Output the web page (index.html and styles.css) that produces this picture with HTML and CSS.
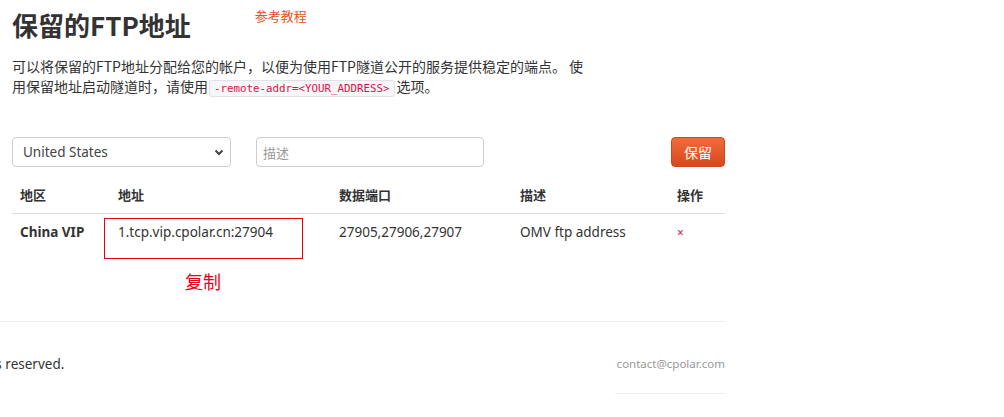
FILE: index.html
```html
<!DOCTYPE html>
<html lang="zh">
<head>
<meta charset="utf-8">
<link rel="stylesheet" href="styles.css">
</head>
<body>
<div class="page">
  <div class="head">
    <h1 class="title">保留的FTP地址</h1>
    <a class="ref">参考教程</a>
  </div>
  <p class="desc">可以将保留的FTP地址分配给您的帐户，以便为使用FTP隧道公开的服务提供稳定的端点。 使用保留地址启动隧道时，请使用<code class="code">-remote-addr=&lt;YOUR_ADDRESS&gt;</code>选项。</p>
  <div class="form">
    <div class="select">
      <span>United States</span>
      <svg width="10" height="7" viewBox="0 0 10 7"><path d="M1.5 1.5 L5 5 L8.5 1.5" fill="none" stroke="#444" stroke-width="2"/></svg>
    </div>
    <div class="input">描述</div>
    <div class="spacer"></div>
    <button class="btn">保留</button>
  </div>
  <table class="tbl">
    <thead>
      <tr><th class="c1">地区</th><th class="c2">地址</th><th class="c3">数据端口</th><th class="c4">描述</th><th class="c5">操作</th></tr>
    </thead>
    <tbody>
      <tr>
        <td class="c1 bold">China VIP</td>
        <td class="c2"><span class="addr">1.tcp.vip.cpolar.cn:27904</span><span class="redbox"></span></td>
        <td class="c3">27905,27906,27907</td>
        <td class="c4">OMV ftp address</td>
        <td class="c5"><span class="x">×</span></td>
      </tr>
    </tbody>
  </table>
  <div class="copy">复制</div>
</div>
<footer class="footer">
  <div class="frow">
    <span class="rights">© 2023 cpolar. All rights reserved.</span>
    <div class="contact">
      <span>contact@cpolar.com</span>
      <div class="cline"></div>
    </div>
  </div>
</footer>
</body>
</html>
```
FILE: styles.css
```css
* { box-sizing: border-box; }
html, body { margin: 0; padding: 0; background: #fff; }
body {
  font-family: "Noto Sans", "Noto Sans CJK SC", sans-serif;
  color: #333;
  font-size: 14px;
  overflow: hidden;
  width: 1004px;
  height: 417px;
}
.page { width: 725px; padding-left: 12px; }
.head { display: flex; align-items: flex-start; height: 50px; }
.title {
  margin: 7px 0 0 0;
  font-size: 26px;
  font-weight: bold;
  line-height: 36px;
  color: #333;
  font-family: "Noto Sans CJK SC", sans-serif;
  white-space: nowrap;
}
.ref {
  margin: 6px 0 0 64px;
  font-size: 13px;
  color: #e8501f;
  font-family: "Noto Sans CJK SC", sans-serif;
  line-height: 20px;
}
.desc {
  margin: 6px 0 0 0;
  width: 585px;
  font-size: 14px;
  line-height: 20px;
  font-family: "Noto Sans CJK SC", sans-serif;
}
.code {
  font-family: "DejaVu Sans Mono", monospace;
  font-size: 10.8px;
  color: #d14;
  background: #f7f7f9;
  border: 1px solid #e1e1e8;
  border-radius: 3px;
  padding: 1px 4px;
  margin: 0 2px 0 1px;
}
.form { display: flex; align-items: center; margin-top: 38px; height: 30px; }
.select {
  width: 219px; height: 30px;
  border: 1px solid #ccc; border-radius: 4px;
  display: flex; align-items: center; justify-content: space-between;
  padding: 0 6px 0 10px;
  font-size: 13.5px; color: #444;
}
.input {
  margin-left: 25px;
  width: 228px; height: 30px;
  border: 1px solid #ccc; border-radius: 4px;
  display: flex; align-items: center;
  padding: 0 6px;
  font-size: 13px; color: #999;
  font-family: "Noto Sans CJK SC", sans-serif;
}
.spacer { flex: 1; }
.btn {
  width: 54px; height: 30px;
  border: 1px solid #d0461c; border-radius: 4px;
  background: linear-gradient(#ef6d3d, #d9471c);
  color: #fff; font-size: 14px;
  font-family: "Noto Sans CJK SC", sans-serif;
  padding: 0;
}
.tbl { width: 713px; border-collapse: collapse; margin-top: 14px; }
.tbl th {
  text-align: left; font-weight: bold; font-size: 13px;
  font-family: "Noto Sans CJK SC", sans-serif;
  height: 32px; padding: 0 8px 4px 8px; vertical-align: middle;
  border-bottom: 1px solid #ddd;
}
.tbl td {
  padding: 9px 8px 0 8px; height: 46px; vertical-align: top;
  font-size: 13.5px;
}
.c1 { width: 98px; }
.c2 { width: 221px; position: relative; }
.c3 { width: 181px; }
.c4 { width: 157px; }
.bold { font-weight: bold; }
.redbox {
  position: absolute; left: -6px; top: 4px;
  width: 199px; height: 41px;
  border: 1px solid #e60012;
}
.x { color: #d14; font-size: 12px; }
.copy {
  margin: 10px 0 0 173px;
  font-size: 18px; color: #e60012;
  font-family: "Noto Sans CJK SC", sans-serif;
  line-height: 24px;
}
.footer { margin-top: 28px; width: 725px; border-top: 1px solid #eee; }
.frow { display: flex; justify-content: space-between; align-items: flex-start; padding-top: 33px; }
.rights { margin-left: -148px; font-size: 13.5px; color: #333; line-height: 18px; white-space: nowrap; }
.contact { display: flex; flex-direction: column; width: 110px; }
.contact span { font-size: 11.5px; color: #999; line-height: 18px; text-align: right; }
.cline { margin-top: 20px; border-top: 1px solid #eee; }
```
